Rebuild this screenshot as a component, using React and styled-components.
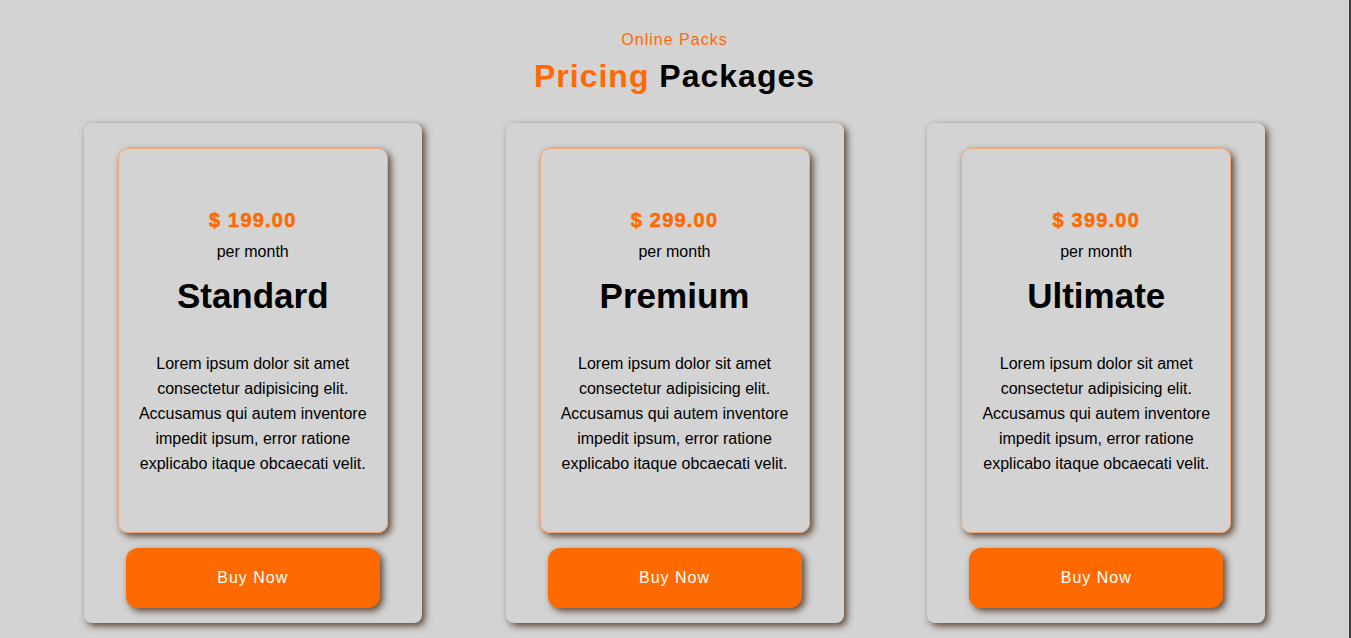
import React from "react";
import styled, { createGlobalStyle } from "styled-components";

const GlobalStyle = createGlobalStyle`
  html, body {
    margin: 0;
    padding: 0;
    background-color: #d3d3d3;
    font-family: "Liberation Sans", Arial, sans-serif;
  }
`;

const Page = styled.div`
  box-sizing: border-box;
  width: 100%;
  min-height: 100vh;
  border-right: 2px solid #3d3d3d;
  padding-top: 31px;
  padding-bottom: 16px;
`;

const Header = styled.header`
  display: flex;
  flex-direction: column;
  align-items: center;
`;

const SubTitle = styled.span`
  font-size: 16px;
  line-height: 18px;
  letter-spacing: 1px;
  color: #ff6a00;
`;

const Title = styled.h1`
  margin: 9px 0 0;
  font-size: 32px;
  line-height: 37px;
  font-weight: bold;
  letter-spacing: 1px;
  color: #000;
`;

const Accent = styled.span`
  color: #ff6a00;
`;

const Cards = styled.section`
  display: flex;
  justify-content: space-evenly;
  margin-top: 28px;
`;

const Card = styled.div`
  box-sizing: border-box;
  width: 338px;
  height: 500px;
  display: flex;
  flex-direction: column;
  align-items: center;
  padding: 25px 0 15px;
  border-radius: 8px;
  background-color: #d3d3d3;
  box-shadow: 3px 3px 7px rgba(70, 45, 25, 0.85);
`;

const Inner = styled.div`
  box-sizing: border-box;
  width: 270px;
  height: 385px;
  display: flex;
  flex-direction: column;
  align-items: center;
  padding: 60px 15px 0;
  border: 1px solid #f2a673;
  border-radius: 10px;
  box-shadow: 3px 3px 7px rgba(70, 45, 25, 0.85);
  text-align: center;
`;

const Price = styled.div`
  font-size: 20px;
  line-height: 23px;
  font-weight: 900;
  letter-spacing: 1.2px;
  color: #ff6a00;
  -webkit-text-stroke: 0.5px #ff6a00;
`;

const Period = styled.div`
  margin-top: 11px;
  font-size: 16px;
  line-height: 18px;
  color: #000;
`;

const Name = styled.h2`
  margin: 15px 0 0;
  font-size: 35px;
  line-height: 40px;
  font-weight: bold;
  color: #000;
`;

const Text = styled.p`
  margin: 35px 0 0;
  font-size: 16px;
  line-height: 25px;
  color: #000;
`;

const BuyButton = styled.button`
  margin-top: 15px;
  width: 254px;
  height: 60px;
  border: none;
  border-radius: 12px;
  background-color: #ff6a00;
  color: #fff;
  font-family: "Liberation Sans", Arial, sans-serif;
  font-size: 16px;
  letter-spacing: 1px;
  box-shadow: 3px 3px 7px rgba(70, 45, 25, 0.85);
  cursor: pointer;
`;

const packs = [
  { price: "$ 199.00", name: "Standard" },
  { price: "$ 299.00", name: "Premium" },
  { price: "$ 399.00", name: "Ultimate" },
];

const lorem =
  "Lorem ipsum dolor sit amet consectetur adipisicing elit. Accusamus qui autem inventore impedit ipsum, error ratione explicabo itaque obcaecati velit.";

const App = () => {
  return (
    <Page>
      <GlobalStyle />
      <Header>
        <SubTitle>Online Packs</SubTitle>
        <Title>
          <Accent>Pricing</Accent> Packages
        </Title>
      </Header>
      <Cards>
        {packs.map((p) => (
          <Card key={p.name}>
            <Inner>
              <Price>{p.price}</Price>
              <Period>per month</Period>
              <Name>{p.name}</Name>
              <Text>{lorem}</Text>
            </Inner>
            <BuyButton>Buy Now</BuyButton>
          </Card>
        ))}
      </Cards>
    </Page>
  );
};

export default App;
